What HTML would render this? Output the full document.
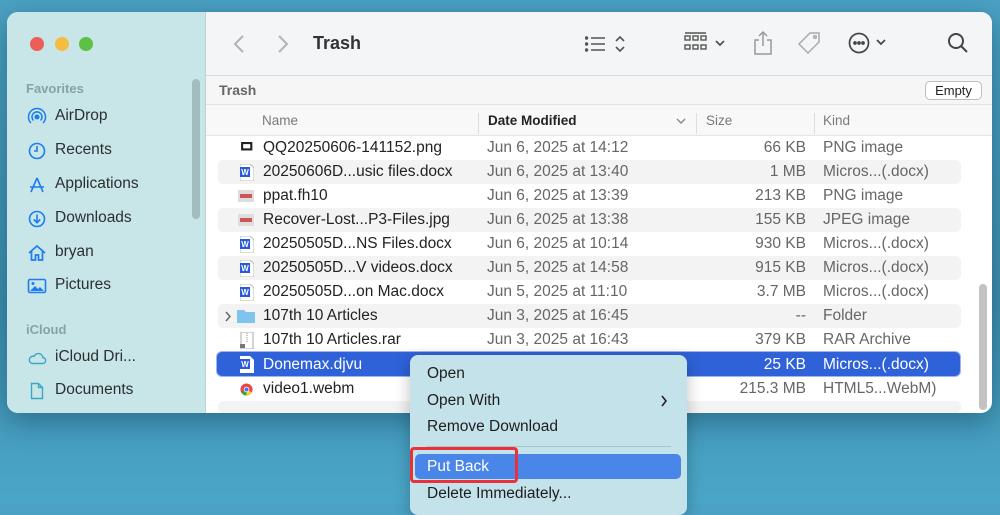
<!DOCTYPE html>
<html><head><meta charset="utf-8"><style>
*{margin:0;padding:0;box-sizing:border-box}
body{width:1000px;height:504px;overflow:hidden;background:linear-gradient(180deg,#4ba2c4 0%,#3f8fb0 60%,#4aa6c8 100%);font-family:"Liberation Sans",sans-serif;position:relative}
.win{position:absolute;left:7px;top:12px;width:985px;height:401px;border-radius:11px;overflow:hidden;background:#fff;box-shadow:0 8px 30px rgba(0,40,60,.4)}
.side{position:absolute;left:0;top:0;width:199px;height:100%;background:#c8e6e8;border-right:1px solid #b9d4d6}
.dot{position:absolute;top:25px;width:14px;height:14px;border-radius:50%}
.sh{position:absolute;left:19px;font-size:13px;color:#8aa1a3;font-weight:bold}
.si{position:absolute;left:20px;font-size:15.5px;color:#2b2f30;height:20px;line-height:20px}
.si svg{position:absolute;left:0;top:1px}
.si span{position:absolute;left:28px;white-space:nowrap}
.tb{position:absolute;left:199px;top:0;right:0;height:64px;background:#f3f5f6;border-bottom:1px solid #dcdcdc}
.ph{position:absolute;left:199px;top:64px;right:0;height:29px;background:#f6f6f6;border-bottom:1px solid #e2e2e2}
.ch{position:absolute;left:199px;top:93px;right:0;height:31px;background:#f8f8f8;border-bottom:1px solid #e4e4e4;font-size:13.5px;color:#7a7a7a}
.ch div{position:absolute;top:8px}
.sep{position:absolute;top:5px;width:1px;height:21px;background:#ddd}
.row{position:absolute;left:218px;width:743px;height:24px;font-size:15.5px;color:#333;line-height:24px;border-radius:5px}
.row.s{background:#f3f3f3}
.row div{position:absolute;white-space:nowrap}
.n{left:45px;color:#222}.d{left:269px;color:#666}.z{right:155px;text-align:right;color:#666}.k{left:605px;color:#666}
.ic{position:absolute;left:22px;top:4px;width:14px;height:17px}
.sel{background:#2f62d8;border:2px solid #2f62d8;box-shadow:0 0 0 1px #9bb6f2}
.sel div{color:#fff!important}
.menu{position:absolute;left:410px;top:355px;width:277px;height:160px;background:#c4e2ea;border-radius:8px;box-shadow:0 4px 16px rgba(0,0,0,.25);font-size:15.5px;color:#1e1e1e}
.menu div.it{position:absolute;left:17px;white-space:nowrap}
</style></head><body>
<div class="win">
 <div class="side">
  <div class="dot" style="left:23px;background:#ec5f57"></div>
  <div class="dot" style="left:48px;background:#f4bc41"></div>
  <div class="dot" style="left:72px;background:#5dc144"></div>
  <div style="position:absolute;left:185px;top:67px;width:8px;height:140px;border-radius:4px;background:#a3bcbe"></div>
  <div class="sh" style="top:69px">Favorites</div>
  <div class="si" style="top:94px"><svg width="20" height="20" viewBox="0 0 20 20" fill="none" stroke="#1c7cf0" stroke-width="1.5"><circle cx="10" cy="10" r="1.8" fill="#1c7cf0"/><path d="M6.5 13.5a5 5 0 1 1 7 0M4 16a8.5 8.5 0 1 1 12 0"/></svg><span>AirDrop</span></div>
  <div class="si" style="top:128px"><svg width="20" height="20" viewBox="0 0 20 20" fill="none" stroke="#1c7cf0" stroke-width="1.6"><circle cx="10" cy="10" r="7.5"/><path d="M10 5v5h-3"/></svg><span>Recents</span></div>
  <div class="si" style="top:162px"><svg width="20" height="20" viewBox="0 0 20 20" fill="none" stroke="#1c7cf0" stroke-width="1.6"><path d="M10 3L4 17M10 3l6 14M3 12h14"/></svg><span>Applications</span></div>
  <div class="si" style="top:196px"><svg width="20" height="20" viewBox="0 0 20 20" fill="none" stroke="#1c7cf0" stroke-width="1.6"><circle cx="10" cy="10" r="7.5"/><path d="M10 5.5v8M6.8 10.5l3.2 3.2 3.2-3.2"/></svg><span>Downloads</span></div>
  <div class="si" style="top:230px"><svg width="20" height="20" viewBox="0 0 20 20" fill="none" stroke="#1c7cf0" stroke-width="1.7"><path d="M2 10L10 3l8 7M4.5 8v9h4v-5h3v5h4V8"/></svg><span>bryan</span></div>
  <div class="si" style="top:263px"><svg width="20" height="20" viewBox="0 0 20 20"><rect x="1.5" y="3.5" width="17" height="13" rx="1.5" fill="none" stroke="#1c7cf0" stroke-width="1.6"/><path d="M3 15l5-5 3 3 2-2 4 4z" fill="#1c7cf0"/><circle cx="6" cy="7.5" r="1.5" fill="#1c7cf0"/></svg><span>Pictures</span></div>
  <div class="sh" style="top:310px">iCloud</div>
  <div class="si" style="top:335px"><svg width="20" height="20" viewBox="0 0 20 20" fill="none" stroke="#3aa7c6" stroke-width="1.4"><path d="M5 15.5h10.5a3 3 0 0 0 .3-6 4.5 4.5 0 0 0-8.6-1.2A3.6 3.6 0 0 0 5 15.5z"/></svg><span>iCloud Dri...</span></div>
  <div class="si" style="top:368px"><svg width="20" height="20" viewBox="0 0 20 20" fill="none" stroke="#3aa7c6" stroke-width="1.4"><path d="M4.5 2.5h7l4 4v11h-11zM11.5 2.5v4h4"/></svg><span>Documents</span></div>
 </div>
 <div class="tb">
  <svg style="position:absolute;left:26px;top:22px" width="14" height="20" viewBox="0 0 14 20" fill="none" stroke="#b0b4b6" stroke-width="2"><path d="M11 2L3 10l8 8"/></svg>
  <svg style="position:absolute;left:70px;top:22px" width="14" height="20" viewBox="0 0 14 20" fill="none" stroke="#b0b4b6" stroke-width="2"><path d="M3 2l8 8-8 8"/></svg>
  <div style="position:absolute;left:107px;top:21px;font-size:18px;font-weight:bold;color:#333">Trash</div>
  <svg style="position:absolute;left:379px;top:22px" width="48" height="20" viewBox="0 0 48 20" fill="none" stroke="#555" stroke-width="1.6"><path d="M6 4h14M6 10h14M6 16h14"/><circle cx="1.5" cy="4" r="1" fill="#555"/><circle cx="1.5" cy="10" r="1" fill="#555"/><circle cx="1.5" cy="16" r="1" fill="#555"/><path d="M31 7l4-4 4 4M31 13l4 4 4-4"/></svg>
  <svg style="position:absolute;left:478px;top:19px" width="46" height="24" viewBox="0 0 46 24" fill="none" stroke="#555" stroke-width="1.4"><path d="M1 2h21"/><rect x="1" y="5" width="5" height="4"/><rect x="9" y="5" width="5" height="4"/><rect x="17" y="5" width="5" height="4"/><rect x="1" y="14" width="5" height="4"/><rect x="9" y="14" width="5" height="4"/><rect x="17" y="14" width="5" height="4"/><path d="M32 10l4 4 4-4" stroke-width="1.8"/></svg>
  <svg style="position:absolute;left:547px;top:18px" width="20" height="26" viewBox="0 0 20 26" fill="none" stroke="#999" stroke-width="1.5"><path d="M10 2v14M6 6l4-4 4 4M6 10H2v14h16V10h-4"/></svg>
  <svg style="position:absolute;left:590px;top:18px" width="28" height="26" viewBox="0 0 28 26" fill="none" stroke="#aaa" stroke-width="1.5"><path d="M14 3h9v9L12 23 3 14z"/><circle cx="19" cy="7" r="1.3"/></svg>
  <svg style="position:absolute;left:642px;top:19px" width="44" height="24" viewBox="0 0 44 24" fill="none" stroke="#444" stroke-width="1.7"><circle cx="11" cy="12" r="9.5"/><circle cx="7" cy="12" r="1" fill="#444"/><circle cx="11" cy="12" r="1" fill="#444"/><circle cx="15" cy="12" r="1" fill="#444"/><path d="M29 9l4 4 4-4"/></svg>
  <svg style="position:absolute;left:740px;top:19px" width="24" height="24" viewBox="0 0 24 24" fill="none" stroke="#444" stroke-width="2"><circle cx="10" cy="10" r="7"/><path d="M15 15l6 6"/></svg>
 </div>
 <div class="ph"><div style="position:absolute;left:13px;top:6px;font-size:14px;font-weight:bold;color:#666">Trash</div>
  <div style="position:absolute;left:719px;top:5px;width:57px;height:19px;border:1px solid #bdbdbd;border-radius:5px;background:#fff;font-size:13px;text-align:center;line-height:17px;color:#222">Empty</div></div>
 <div class="ch">
  <div style="left:56px">Name</div>
  <div class="sep" style="left:272px"></div>
  <div style="left:282px;color:#222;font-weight:bold">Date Modified</div>
  <svg style="position:absolute;left:469px;top:11px" width="12" height="10" viewBox="0 0 12 10" fill="none" stroke="#888" stroke-width="1.4"><path d="M2 3l4 4 4-4"/></svg>
  <div class="sep" style="left:490px"></div>
  <div style="left:500px">Size</div>
  <div class="sep" style="left:608px"></div>
  <div style="left:617px">Kind</div>
 </div>
 <div style="position:absolute;left:972px;top:272px;width:8px;height:126px;border-radius:4px;background:#c2c2c2"></div>
</div>
<div style="position:absolute;left:0;top:0">
<div class="row" style="top:136px"><svg class="ic" viewBox="0 0 14 17" style="top:6px;left:20px;width:16px;height:12px"><rect width="16" height="12" fill="#222"/><rect x="3" y="3" width="10" height="6" fill="#fff"/></svg><div class="n">QQ20250606-141152.png</div><div class="d">Jun 6, 2025 at 14:12</div><div class="z">66 KB</div><div class="k">PNG image</div></div>
<div class="row s" style="top:160px"><svg class="ic" viewBox="0 0 14 17"><path d="M0 0h10l4 4v13H0z" fill="#fff" stroke="#bbb"/><rect x="0" y="3" width="10" height="10" fill="#2a5bd7"/><text x="5" y="11" font-size="8" fill="#fff" text-anchor="middle" font-family="Liberation Sans" font-weight="bold">W</text></svg><div class="n">20250606D...usic files.docx</div><div class="d">Jun 6, 2025 at 13:40</div><div class="z">1 MB</div><div class="k">Micros...(.docx)</div></div>
<div class="row" style="top:184px"><svg class="ic" viewBox="0 0 16 12" style="top:6px;left:20px;width:16px;height:12px"><rect width="16" height="12" fill="#ddd"/><rect x="2" y="4" width="12" height="4" fill="#c55"/></svg><div class="n">ppat.fh10</div><div class="d">Jun 6, 2025 at 13:39</div><div class="z">213 KB</div><div class="k">PNG image</div></div>
<div class="row s" style="top:208px"><svg class="ic" viewBox="0 0 16 12" style="top:6px;left:20px;width:16px;height:12px"><rect width="16" height="12" fill="#ddd"/><rect x="2" y="4" width="12" height="4" fill="#c55"/></svg><div class="n">Recover-Lost...P3-Files.jpg</div><div class="d">Jun 6, 2025 at 13:38</div><div class="z">155 KB</div><div class="k">JPEG image</div></div>
<div class="row" style="top:232px"><svg class="ic" viewBox="0 0 14 17"><path d="M0 0h10l4 4v13H0z" fill="#fff" stroke="#bbb"/><rect x="0" y="3" width="10" height="10" fill="#2a5bd7"/><text x="5" y="11" font-size="8" fill="#fff" text-anchor="middle" font-family="Liberation Sans" font-weight="bold">W</text></svg><div class="n">20250505D...NS Files.docx</div><div class="d">Jun 6, 2025 at 10:14</div><div class="z">930 KB</div><div class="k">Micros...(.docx)</div></div>
<div class="row s" style="top:256px"><svg class="ic" viewBox="0 0 14 17"><path d="M0 0h10l4 4v13H0z" fill="#fff" stroke="#bbb"/><rect x="0" y="3" width="10" height="10" fill="#2a5bd7"/><text x="5" y="11" font-size="8" fill="#fff" text-anchor="middle" font-family="Liberation Sans" font-weight="bold">W</text></svg><div class="n">20250505D...V videos.docx</div><div class="d">Jun 5, 2025 at 14:58</div><div class="z">915 KB</div><div class="k">Micros...(.docx)</div></div>
<div class="row" style="top:280px"><svg class="ic" viewBox="0 0 14 17"><path d="M0 0h10l4 4v13H0z" fill="#fff" stroke="#bbb"/><rect x="0" y="3" width="10" height="10" fill="#2a5bd7"/><text x="5" y="11" font-size="8" fill="#fff" text-anchor="middle" font-family="Liberation Sans" font-weight="bold">W</text></svg><div class="n">20250505D...on Mac.docx</div><div class="d">Jun 5, 2025 at 11:10</div><div class="z">3.7 MB</div><div class="k">Micros...(.docx)</div></div>
<div class="row s" style="top:304px"><svg style="position:absolute;left:6px;top:7px" width="8" height="11" viewBox="0 0 8 11" fill="none" stroke="#666" stroke-width="1.5"><path d="M2 1l4 4.5L2 10"/></svg><svg class="ic" viewBox="0 0 18 14" style="left:19px;top:5px;width:18px;height:14px"><path d="M0 1h7l2 2h9v11H0z" fill="#7fc3ef"/></svg><div class="n">107th 10 Articles</div><div class="d">Jun 3, 2025 at 16:45</div><div class="z">--</div><div class="k">Folder</div></div>
<div class="row" style="top:328px"><svg class="ic" viewBox="0 0 14 17"><path d="M1 0h12v17H1z" fill="#fff" stroke="#aaa"/><path d="M7 1v9" stroke="#888" stroke-dasharray="1 1"/><rect x="0" y="12" width="5" height="4" fill="#777"/></svg><div class="n">107th 10 Articles.rar</div><div class="d">Jun 3, 2025 at 16:43</div><div class="z">379 KB</div><div class="k">RAR Archive</div></div>
<div class="row sel" style="top:352px;left:217px;height:24px;width:743px;border-radius:5px"><svg class="ic" viewBox="0 0 14 17" style="left:21px;top:2px"><path d="M0 0h10l4 4v13H0z" fill="#fff"/><rect x="0" y="3" width="10" height="10" fill="#2a5bd7"/><text x="5" y="11" font-size="8" fill="#fff" text-anchor="middle" font-family="Liberation Sans" font-weight="bold">W</text></svg><div class="n" style="left:44px;top:-1px">Donemax.djvu</div><div class="z" style="right:152px;top:-1px">25 KB</div><div class="k" style="left:604px;top:-1px">Micros...(.docx)</div></div>
<div class="row" style="top:377px"><svg class="ic" viewBox="0 0 14 14" style="top:6px;width:13px;height:13px"><circle cx="7" cy="7" r="6.5" fill="#e44"/><path d="M7 7L1.5 10A6.5 6.5 0 0 0 7 13.5z" fill="#3a3"/><path d="M7 7l5.5 3A6.5 6.5 0 0 1 7 13.5z" fill="#fc3"/><circle cx="7" cy="7" r="3" fill="#fff"/><circle cx="7" cy="7" r="2.2" fill="#47e"/></svg><div class="n">video1.webm</div><div class="d">Jun 5, 2025</div><div class="z">215.3 MB</div><div class="k">HTML5...WebM)</div></div>
<div class="row s" style="top:401px;height:12px"></div>
</div>
<div class="menu">
 <div class="it" style="top:10px">Open</div>
 <div class="it" style="top:37px">Open With</div>
 <svg style="position:absolute;left:250px;top:39px" width="8" height="14" viewBox="0 0 8 14" fill="none" stroke="#222" stroke-width="1.6"><path d="M2 2l4 5-4 5"/></svg>
 <div class="it" style="top:63px">Remove Download</div>
 <div style="position:absolute;left:17px;right:16px;top:91px;height:1px;background:#a9c5cc"></div>
 <div style="position:absolute;left:5px;right:6px;top:99px;height:25px;background:#4a86e8;border-radius:5px"></div>
 <div class="it" style="top:103px;color:#fff">Put Back</div>
 <div style="position:absolute;left:0;top:92px;width:108px;height:36px;border:3px solid #e8313a;border-radius:4px"></div>
 <div class="it" style="top:130px">Delete Immediately...</div>
</div>
</body></html>
